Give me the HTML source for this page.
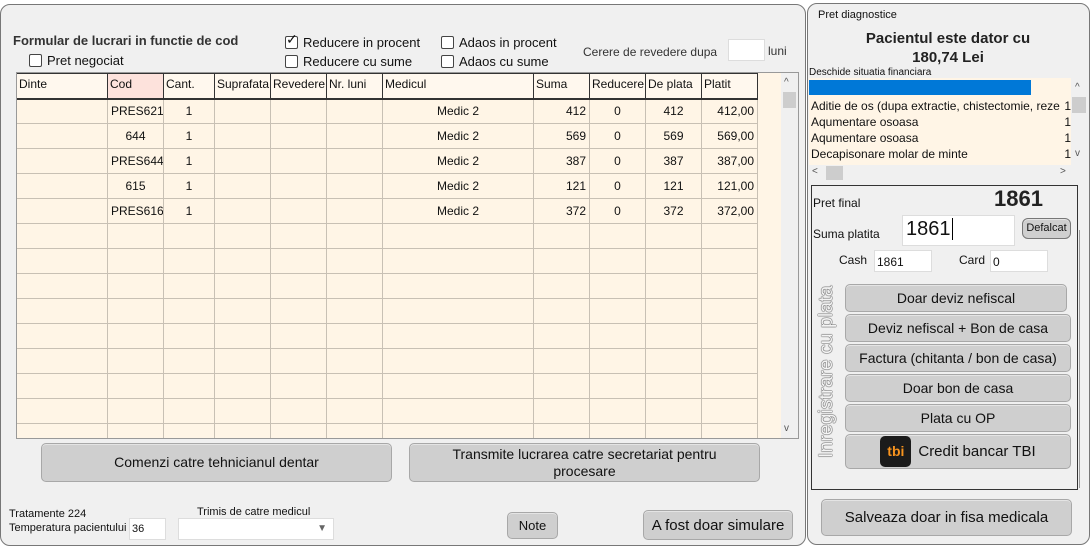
<!DOCTYPE html>
<html><head><meta charset="utf-8"><style>
*{box-sizing:border-box;margin:0;padding:0}
body{width:1092px;height:546px;background:#fff;font-family:"Liberation Sans",sans-serif;font-size:12px;color:#111;position:relative;overflow:hidden}
.a{position:absolute}
.win{background:#f0f0f0;border:1px solid #777;border-radius:10px}
.btn{position:absolute;background:#cfcfcf;border:1px solid #a8a8a8;border-radius:5px;text-align:center;font-size:14px;color:#111;display:flex;align-items:center;justify-content:center;line-height:17px;box-shadow:inset 0 1px 0 #e4e4e4}
.cb{position:absolute;width:13px;height:13px;border:1px solid #444;background:#fff;border-radius:2px}
table{border-collapse:collapse;table-layout:fixed}
td{border:1px solid #c8c0b4;height:25px;font-size:12px;padding:0 3px;white-space:nowrap;overflow:hidden}
th{border:1px solid #333;border-bottom:2px solid #333;height:25px;font-weight:normal;text-align:left;font-size:12px;padding:0 2px;vertical-align:top;padding-top:3px;white-space:nowrap;overflow:hidden;background:#fff8ee}
.r{text-align:right}.c{text-align:center}
.inp{position:absolute;background:#fff;border:1px solid #ddd}
</style></head><body>
<div class="a" style="left:0;top:0;width:805px;height:6px;background:#fff"></div>
<div class="a win" style="left:0;top:4px;width:806px;height:542px"></div>
<div class="a" style="left:13px;top:33px;font-weight:bold;font-size:13px;color:#333">Formular de lucrari in functie de cod</div>
<div class="cb" style="left:29px;top:54px"></div><div class="a" style="left:47px;top:53px;font-size:13px">Pret negociat</div>
<div class="cb" style="left:285px;top:36px"></div><div class="a" style="left:286px;top:31px;font-size:14px">✓</div>
<div class="a" style="left:303px;top:35px;font-size:13px">Reducere in procent</div>
<div class="cb" style="left:285px;top:55px"></div><div class="a" style="left:303px;top:54px;font-size:13px">Reducere cu sume</div>
<div class="cb" style="left:441px;top:36px"></div><div class="a" style="left:459px;top:35px;font-size:13px">Adaos in procent</div>
<div class="cb" style="left:441px;top:55px"></div><div class="a" style="left:459px;top:54px;font-size:13px">Adaos cu sume</div>
<div class="a" style="left:583px;top:45px;font-size:12px;color:#333">Cerere de revedere dupa</div>
<div class="inp" style="left:728px;top:39px;width:37px;height:22px"></div>
<div class="a" style="left:768px;top:44px;font-size:12px;color:#333">luni</div>
<div class="a" style="left:16px;top:72px;width:783px;height:367px;background:#fff5e6;border:1px solid #999;overflow:hidden">
<table style="width:742px;margin-left:-1px">
<colgroup><col style="width:91px"><col style="width:56px"><col style="width:51px"><col style="width:56px"><col style="width:56px"><col style="width:56px"><col style="width:151px"><col style="width:56px"><col style="width:56px"><col style="width:56px"><col style="width:56px"></colgroup>
<tr><th>Dinte</th><th style="background:#fde2dc">Cod</th><th>Cant.</th><th>Suprafata</th><th>Revedere</th><th>Nr. luni</th><th>Medicul</th><th>Suma</th><th>Reducere</th><th>De plata</th><th>Platit</th></tr>
<tr><td></td><td style="border:1px dotted #000">PRES621</td><td class="c">1</td><td></td><td></td><td></td><td class="c">Medic 2</td><td class="r">412</td><td class="c">0</td><td class="c">412</td><td class="r">412,00</td></tr>
<tr><td></td><td class="c">644</td><td class="c">1</td><td></td><td></td><td></td><td class="c">Medic 2</td><td class="r">569</td><td class="c">0</td><td class="c">569</td><td class="r">569,00</td></tr>
<tr><td></td><td>PRES644</td><td class="c">1</td><td></td><td></td><td></td><td class="c">Medic 2</td><td class="r">387</td><td class="c">0</td><td class="c">387</td><td class="r">387,00</td></tr>
<tr><td></td><td class="c">615</td><td class="c">1</td><td></td><td></td><td></td><td class="c">Medic 2</td><td class="r">121</td><td class="c">0</td><td class="c">121</td><td class="r">121,00</td></tr>
<tr><td></td><td>PRES616</td><td class="c">1</td><td></td><td></td><td></td><td class="c">Medic 2</td><td class="r">372</td><td class="c">0</td><td class="c">372</td><td class="r">372,00</td></tr>
<tr><td></td><td></td><td></td><td></td><td></td><td></td><td></td><td></td><td></td><td></td><td></td></tr>
<tr><td></td><td></td><td></td><td></td><td></td><td></td><td></td><td></td><td></td><td></td><td></td></tr>
<tr><td></td><td></td><td></td><td></td><td></td><td></td><td></td><td></td><td></td><td></td><td></td></tr>
<tr><td></td><td></td><td></td><td></td><td></td><td></td><td></td><td></td><td></td><td></td><td></td></tr>
<tr><td></td><td></td><td></td><td></td><td></td><td></td><td></td><td></td><td></td><td></td><td></td></tr>
<tr><td></td><td></td><td></td><td></td><td></td><td></td><td></td><td></td><td></td><td></td><td></td></tr>
<tr><td></td><td></td><td></td><td></td><td></td><td></td><td></td><td></td><td></td><td></td><td></td></tr>
<tr><td></td><td></td><td></td><td></td><td></td><td></td><td></td><td></td><td></td><td></td><td></td></tr>
<tr><td></td><td></td><td></td><td></td><td></td><td></td><td></td><td></td><td></td><td></td><td></td></tr>
</table>
<div class="a" style="left:764px;top:0;width:17px;height:367px;background:#f0f0f0"></div>
<div class="a" style="left:766px;top:19px;width:13px;height:16px;background:#cdcdcd"></div>
<div class="a" style="left:767px;top:4px;font-size:10px;color:#555">^</div>
<div class="a" style="left:767px;top:350px;font-size:10px;color:#555">v</div>
</div>
<div class="btn" style="left:41px;top:443px;width:351px;height:39px">Comenzi catre tehnicianul dentar</div>
<div class="btn" style="left:409px;top:443px;width:351px;height:39px">Transmite lucrarea catre secretariat pentru<br>procesare</div>
<div class="a" style="left:9px;top:508px;font-size:11px">Tratamente 224</div>
<div class="a" style="left:9px;top:522px;font-size:11px">Temperatura pacientului</div>
<div class="inp" style="left:129px;top:518px;width:37px;height:22px;padding:4px 2px;font-size:11px">36</div>
<div class="a" style="left:197px;top:506px;font-size:11px">Trimis de catre medicul</div>
<div class="inp" style="left:178px;top:518px;width:156px;height:22px;color:#666;font-size:10px;text-align:right;padding:4px 6px">▼</div>
<div class="btn" style="left:507px;top:512px;width:51px;height:27px;font-size:13px">Note</div>
<div class="btn" style="left:643px;top:510px;width:150px;height:30px;font-size:15px">A fost doar simulare</div>

<div class="a win" style="left:807px;top:3px;width:283px;height:542px"></div>
<div class="a" style="left:818px;top:9px;font-size:11px">Pret diagnostice</div>
<div class="a" style="left:808px;top:29px;width:280px;text-align:center;font-weight:bold;font-size:15px;line-height:19px;color:#222">Pacientul este dator cu<br>180,74 Lei</div>
<div class="a" style="left:809px;top:67px;font-size:10px">Deschide situatia financiara</div>
<div class="a" style="left:809px;top:78px;width:279px;height:87px;background:#fff5e6"></div>
<div class="a" style="left:809px;top:80px;width:222px;height:15px;background:#0078d7"></div>
<div class="a" style="left:811px;top:98px;width:260px;font-size:12px;line-height:16px">
<div style="display:flex;justify-content:space-between"><span>Aditie de os (dupa extractie, chistectomie, reze</span><span>1</span></div>
<div style="display:flex;justify-content:space-between"><span>Aqumentare osoasa</span><span>1</span></div>
<div style="display:flex;justify-content:space-between"><span>Aqumentare osoasa</span><span>1</span></div>
<div style="display:flex;justify-content:space-between"><span>Decapisonare molar de minte</span><span>1</span></div></div>
<div class="a" style="left:1071px;top:78px;width:17px;height:87px;background:#f0f0f0"></div>
<div class="a" style="left:1072px;top:97px;width:14px;height:16px;background:#cdcdcd"></div>
<div class="a" style="left:1075px;top:82px;font-size:10px;color:#555">^</div>
<div class="a" style="left:1075px;top:148px;font-size:10px;color:#555">v</div>
<div class="a" style="left:809px;top:165px;width:262px;height:17px;background:#f0f0f0"></div>
<div class="a" style="left:826px;top:166px;width:17px;height:14px;background:#cdcdcd"></div>
<div class="a" style="left:812px;top:166px;font-size:10px;color:#555">&lt;</div>
<div class="a" style="left:1060px;top:166px;font-size:10px;color:#555">&gt;</div>
<div class="a" style="left:811px;top:185px;width:267px;height:305px;border:1px solid #333"></div>
<div class="a" style="left:813px;top:196px;font-size:12px">Pret final</div>
<div class="a" style="left:994px;top:186px;font-size:22px;font-weight:bold;color:#222">1861</div>
<div class="a" style="left:813px;top:227px;font-size:12px">Suma platita</div>
<div class="inp" style="left:902px;top:215px;width:113px;height:31px;font-size:20px;padding:2px 3px">1861<span style="border-left:1px solid #000;margin-left:1px"></span></div>
<div class="btn" style="left:1022px;top:218px;width:49px;height:21px;font-size:11px;border-radius:6px;border-color:#777">Defalcat</div>
<div class="a" style="left:839px;top:253px;font-size:12px">Cash</div>
<div class="inp" style="left:874px;top:250px;width:58px;height:22px;padding:4px 2px;font-size:12px">1861</div>
<div class="a" style="left:959px;top:253px;font-size:12px">Card</div>
<div class="inp" style="left:990px;top:250px;width:58px;height:22px;padding:4px 2px;font-size:12px">0</div>
<div class="a" style="left:1079px;top:230px;width:5px;height:258px;border-left:1px solid #999"></div>
<div class="a" style="left:815px;top:458px;transform-origin:0 0;transform:rotate(-90deg);font-size:19.5px;color:#f4f4f4;white-space:nowrap;text-shadow:0 0 1px #444,0 0 1px #444,0 0 1px #444">Inregistrare cu plata</div>
<div class="btn" style="left:845px;top:284px;width:222px;height:28px">Doar deviz nefiscal</div>
<div class="btn" style="left:845px;top:314px;width:226px;height:28px">Deviz nefiscal + Bon de casa</div>
<div class="btn" style="left:845px;top:344px;width:226px;height:28px">Factura (chitanta / bon de casa)</div>
<div class="btn" style="left:845px;top:374px;width:226px;height:28px">Doar bon de casa</div>
<div class="btn" style="left:845px;top:404px;width:226px;height:28px">Plata cu OP</div>
<div class="btn" style="left:845px;top:434px;width:226px;height:35px;font-size:15px"><span style="display:inline-block;width:31px;height:31px;background:#1b1b1b;border-radius:5px;color:#f7931e;font-weight:bold;font-size:14px;line-height:31px;margin-right:7px">tbi</span>Credit bancar TBI</div>
<div class="btn" style="left:821px;top:499px;width:251px;height:37px;font-size:15px">Salveaza doar in fisa medicala</div>
</body></html>
